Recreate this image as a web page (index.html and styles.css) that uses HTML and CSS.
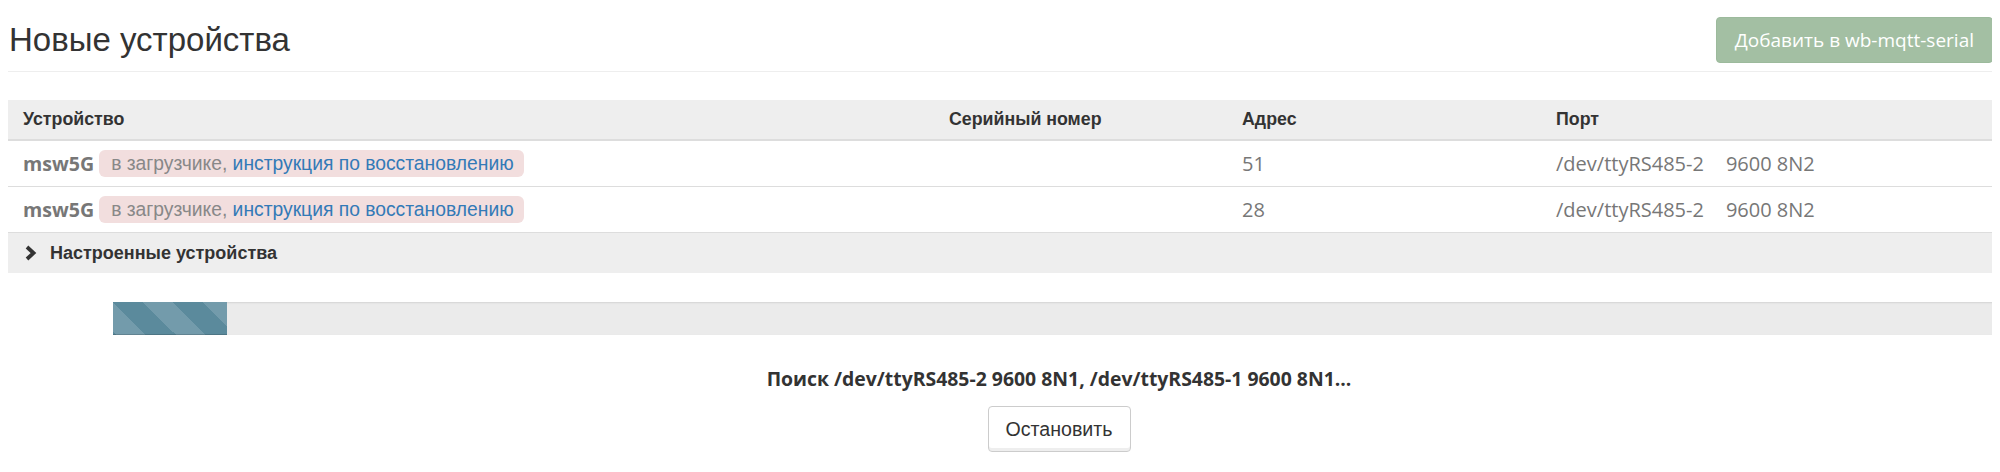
FILE: index.html
```html
<!DOCTYPE html>
<html lang="ru">
<head>
<meta charset="utf-8">
<title>Новые устройства</title>
<link rel="stylesheet" href="styles.css">
</head>
<body>
<div class="page">
  <header class="page-header">
    <h1 class="title">Новые устройства</h1>
    <button class="btn btn-add" disabled>Добавить в wb-mqtt-serial</button>
  </header>

  <div class="devices">
    <div class="grid-row head">
      <div class="cell">Устройство</div>
      <div class="cell">Серийный номер</div>
      <div class="cell">Адрес</div>
      <div class="cell">Порт</div>
    </div>
    <div class="grid-row item">
      <div class="cell"><span class="dev-name">msw5G</span><span class="badge-err">в загрузчике, <a class="link" href="#">инструкция по восстановлению</a></span></div>
      <div class="cell"></div>
      <div class="cell num">51</div>
      <div class="cell num"><span class="port">/dev/ttyRS485-2</span><span>9600 8N2</span></div>
    </div>
    <div class="grid-row item">
      <div class="cell"><span class="dev-name">msw5G</span><span class="badge-err">в загрузчике, <a class="link" href="#">инструкция по восстановлению</a></span></div>
      <div class="cell"></div>
      <div class="cell num">28</div>
      <div class="cell num"><span class="port">/dev/ttyRS485-2</span><span>9600 8N2</span></div>
    </div>
  </div>

  <div class="collapsed-bar">
    <svg class="chevron" width="12" height="16" viewBox="0 0 12 16"><polyline points="2,2 8.5,8 2,14" fill="none" stroke="#333" stroke-width="3.8" stroke-linecap="butt" stroke-linejoin="miter"/></svg>
    <span>Настроенные устройства</span>
  </div>

  <div class="progress">
    <div class="progress-bar" style="width:114px"></div>
  </div>

  <div class="scan">
    <p class="scan-text">Поиск /dev/ttyRS485-2 9600 8N1, /dev/ttyRS485-1 9600 8N1...</p>
    <button class="btn btn-stop">Остановить</button>
  </div>
</div>
</body>
</html>
```

FILE: styles.css
```css
html {
  overflow: hidden;
}

body {
  margin: 8px;
  font-family: "Liberation Sans", Arial, sans-serif;
  color: #333;
  background: #fff;
}

.page {
  width: 2102px;
}

.page-header {
  display: flex;
  align-items: center;
  justify-content: space-between;
  padding: 9px 117px 8px 0;
  border-bottom: 1px solid #eee;
}

.title {
  margin: 0 0 0 1px;
  font-family: "Liberation Sans", Arial, sans-serif;
  font-weight: normal;
  font-size: 33px;
  line-height: 1.1;
  color: #333;
}

.btn {
  cursor: pointer;
  border-radius: 4px;
}

.btn-add {
  height: 46px;
  padding: 0 18px;
  font-family: "Open Sans", sans-serif;
  font-size: 19px;
  color: #fff;
  background: #a3bfa3;
  border: 1px solid #9cba9c;
}

.devices {
  margin-top: 28px;
}

.grid-row {
  display: grid;
  grid-template-columns: 926px 293px 314px 1fr;
  align-items: center;
  box-sizing: border-box;
}

.cell {
  padding: 0 15px;
  white-space: nowrap;
}

.head {
  height: 41px;
  background: #eee;
  border-bottom: 2px solid #ddd;
  font-weight: bold;
  font-size: 17.8px;
  color: #333;
}

.item {
  height: 46px;
  border-bottom: 1px solid #ddd;
}

.dev-name {
  font-family: "Open Sans", sans-serif;
  font-weight: bold;
  font-size: 19.6px;
  color: #777;
  margin-right: 5px;
  vertical-align: middle;
}

.badge-err {
  display: inline-block;
  vertical-align: middle;
  height: 27px;
  line-height: 27px;
  padding: 0 10px 0 12px;
  background: #f2dede;
  border-radius: 6px;
  font-size: 19.3px;
  color: #888;
}

.link {
  color: #337ab7;
  text-decoration: none;
}

.num {
  font-family: "Open Sans", sans-serif;
  font-size: 20px;
  color: #777;
}

.port {
  margin-right: 22px;
}

.collapsed-bar {
  height: 40px;
  background: #eee;
  display: flex;
  align-items: center;
  padding-left: 17px;
  gap: 13px;
  font-weight: bold;
  font-size: 18px;
  color: #333;
}

.chevron {
  display: block;
}

.progress {
  margin: 29px 0 0 105px;
  height: 33px;
  background: #ebebeb;
  box-shadow: inset 0 1px 2px rgba(0, 0, 0, 0.1);
  overflow: hidden;
}

.progress-bar {
  height: 100%;
  background-color: #5b8a9c;
  background-image: linear-gradient(45deg, transparent 25%, rgba(255, 255, 255, 0.15) 25%, rgba(255, 255, 255, 0.15) 50%, transparent 50%, transparent 75%, rgba(255, 255, 255, 0.15) 75%);
  background-size: 60px 60px;
  box-shadow: inset 0 -1px 0 rgba(0, 0, 0, 0.15);
}

.scan {
  display: flex;
  flex-direction: column;
  align-items: center;
}

.scan-text {
  margin: 31px 0 14px;
  font-family: "Open Sans", sans-serif;
  font-weight: bold;
  font-size: 19.4px;
  line-height: 26px;
  color: #333;
}

.btn-stop {
  width: 143px;
  height: 46px;
  font-family: "Liberation Sans", Arial, sans-serif;
  font-size: 19.6px;
  color: #333;
  background: #fff;
  border: 1px solid #ccc;
  box-shadow: inset 0 -3px 0 #eee;
}
```
